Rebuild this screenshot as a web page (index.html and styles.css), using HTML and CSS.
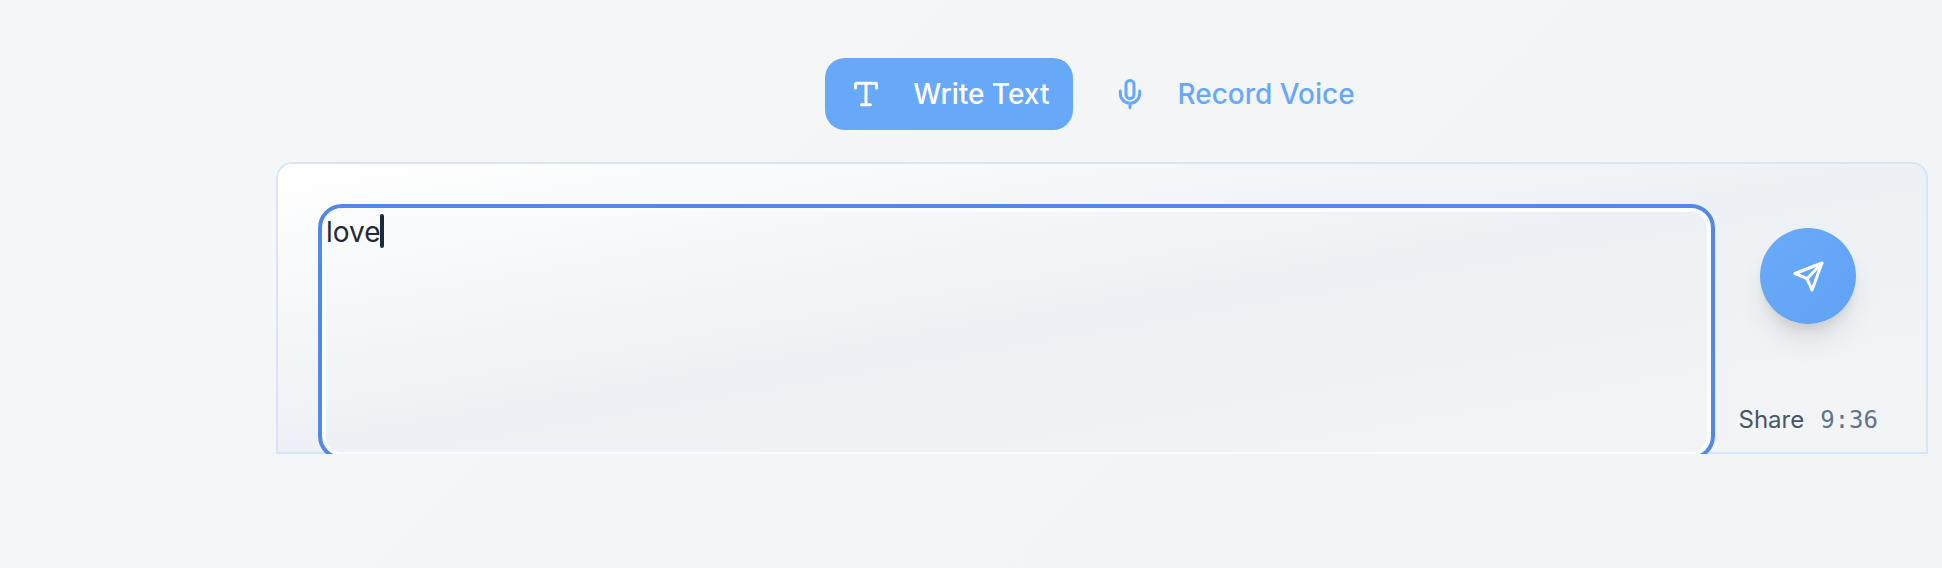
FILE: index.html
```html
<!DOCTYPE html>
<html lang="en">
<head>
<meta charset="utf-8">
<meta name="viewport" content="width=device-width, initial-scale=1">
<title>Share</title>
<link rel="stylesheet" href="styles.css">
</head>
<body>
<main class="composer">
  <div class="modes">
    <button class="mode mode-active" type="button">
      <svg class="icon" viewBox="0 0 32 32" aria-hidden="true"><path d="M6.500 10V6.500q0-1.200 1.200-1.200h18.600q1.200 0 1.200 1.200V10M17 5.300v21.400M12.500 26.700h9"/></svg>
      <span>Write Text</span>
    </button>
    <button class="mode" type="button">
      <svg class="icon" viewBox="0 0 32 32" aria-hidden="true"><path d="M7.300 13v2.500a9.700 9.700 0 0 0 19.400 0V13M17 25.200v4.500"/><rect x="13" y="2.400" width="8" height="18.200" rx="4"/></svg>
      <span>Record Voice</span>
    </button>
  </div>
  <div class="clip">
    <form class="card">
      <div class="field">
        <textarea class="input" aria-label="Write text" spellcheck="false">love</textarea>
        <span class="caret"></span>
      </div>
      <div class="side">
        <button class="send" type="button" aria-label="Send">
          <svg class="icon-send" viewBox="0 0 32 32" aria-hidden="true"><path d="M30 3 3 13.500l12 5.200L20 30 30 3ZM15 18.700 30 3"/></svg>
        </button>
        <div class="status"><span>Share</span><time class="time">9:36</time></div>
      </div>
    </form>
  </div>
</main>
</body>
</html>
```
FILE: styles.css
```css
* {
  box-sizing: border-box;
}

body {
  margin: 0;
  min-height: 100vh;
  font-family: Inter, "Liberation Sans", sans-serif;
  color: #1e293b;
  background: linear-gradient(135deg, #f6f7f9, #f2f3f5);
}

.composer {
  display: flex;
  flex-direction: column;
  gap: 32px;
  padding: 58px 14px 0 276px;
}

.modes {
  display: flex;
  justify-content: center;
  gap: 16px;
}

.mode {
  display: flex;
  align-items: center;
  gap: 32px;
  height: 72px;
  padding: 0 24px;
  border: 0;
  border-radius: 20px;
  background: transparent;
  color: #68a8f8;
  font: 500 28px/40px Inter, "Liberation Sans", sans-serif;
}

.mode-active {
  background: #68a8f8;
  color: #fff;
}

.icon,
.icon-send {
  flex: none;
  width: 32px;
  height: 32px;
  fill: none;
  stroke: currentColor;
  stroke-width: 3;
  stroke-linecap: round;
  stroke-linejoin: round;
}

.clip {
  overflow: hidden;
}

.card {
  display: flex;
  gap: 32px;
  padding: 48px 48px 0;
  border: 2px solid #d6e6f8;
  border-radius: 16px 16px 0 0;
  background: linear-gradient(to bottom right, #fff, #edf1f5 50%, #f3f4f6);
}

.field {
  position: relative;
  flex: 1;
  display: flex;
}

.input {
  flex: 1;
  height: 240px;
  padding: 0;
  border: 0;
  outline: 4px solid #5388ea;
  outline-offset: 4px;
  resize: none;
  border-radius: 16px;
  background: transparent;
  box-shadow: 0 0 0 4px #fafcff;
  color: #1e293b;
  caret-color: transparent;
  font: 400 28px/40px Inter, "Liberation Sans", sans-serif;
}

.caret {
  position: absolute;
  top: 2px;
  left: 54px;
  width: 4px;
  height: 34px;
  border-radius: 2px;
  background: #1e293b;
}

.side {
  display: flex;
  flex-direction: column;
  align-items: center;
  justify-content: space-between;
  padding: 16px 0;
}

.send {
  display: grid;
  place-items: center;
  width: 96px;
  height: 96px;
  padding: 0;
  border: 0;
  border-radius: 50%;
  background: linear-gradient(135deg, #6aaaf9, #62a2f6);
  box-shadow: 0 20px 30px -6px rgb(0 0 0 / 10%), 0 8px 12px -4px rgb(0 0 0 / 10%);
  color: #fff;
}

.status {
  display: flex;
  gap: 16px;
  color: #475569;
  font-size: 24px;
  line-height: 32px;
}

.time {
  color: #64748b;
  font-family: "DejaVu Sans Mono", monospace;
}
```
